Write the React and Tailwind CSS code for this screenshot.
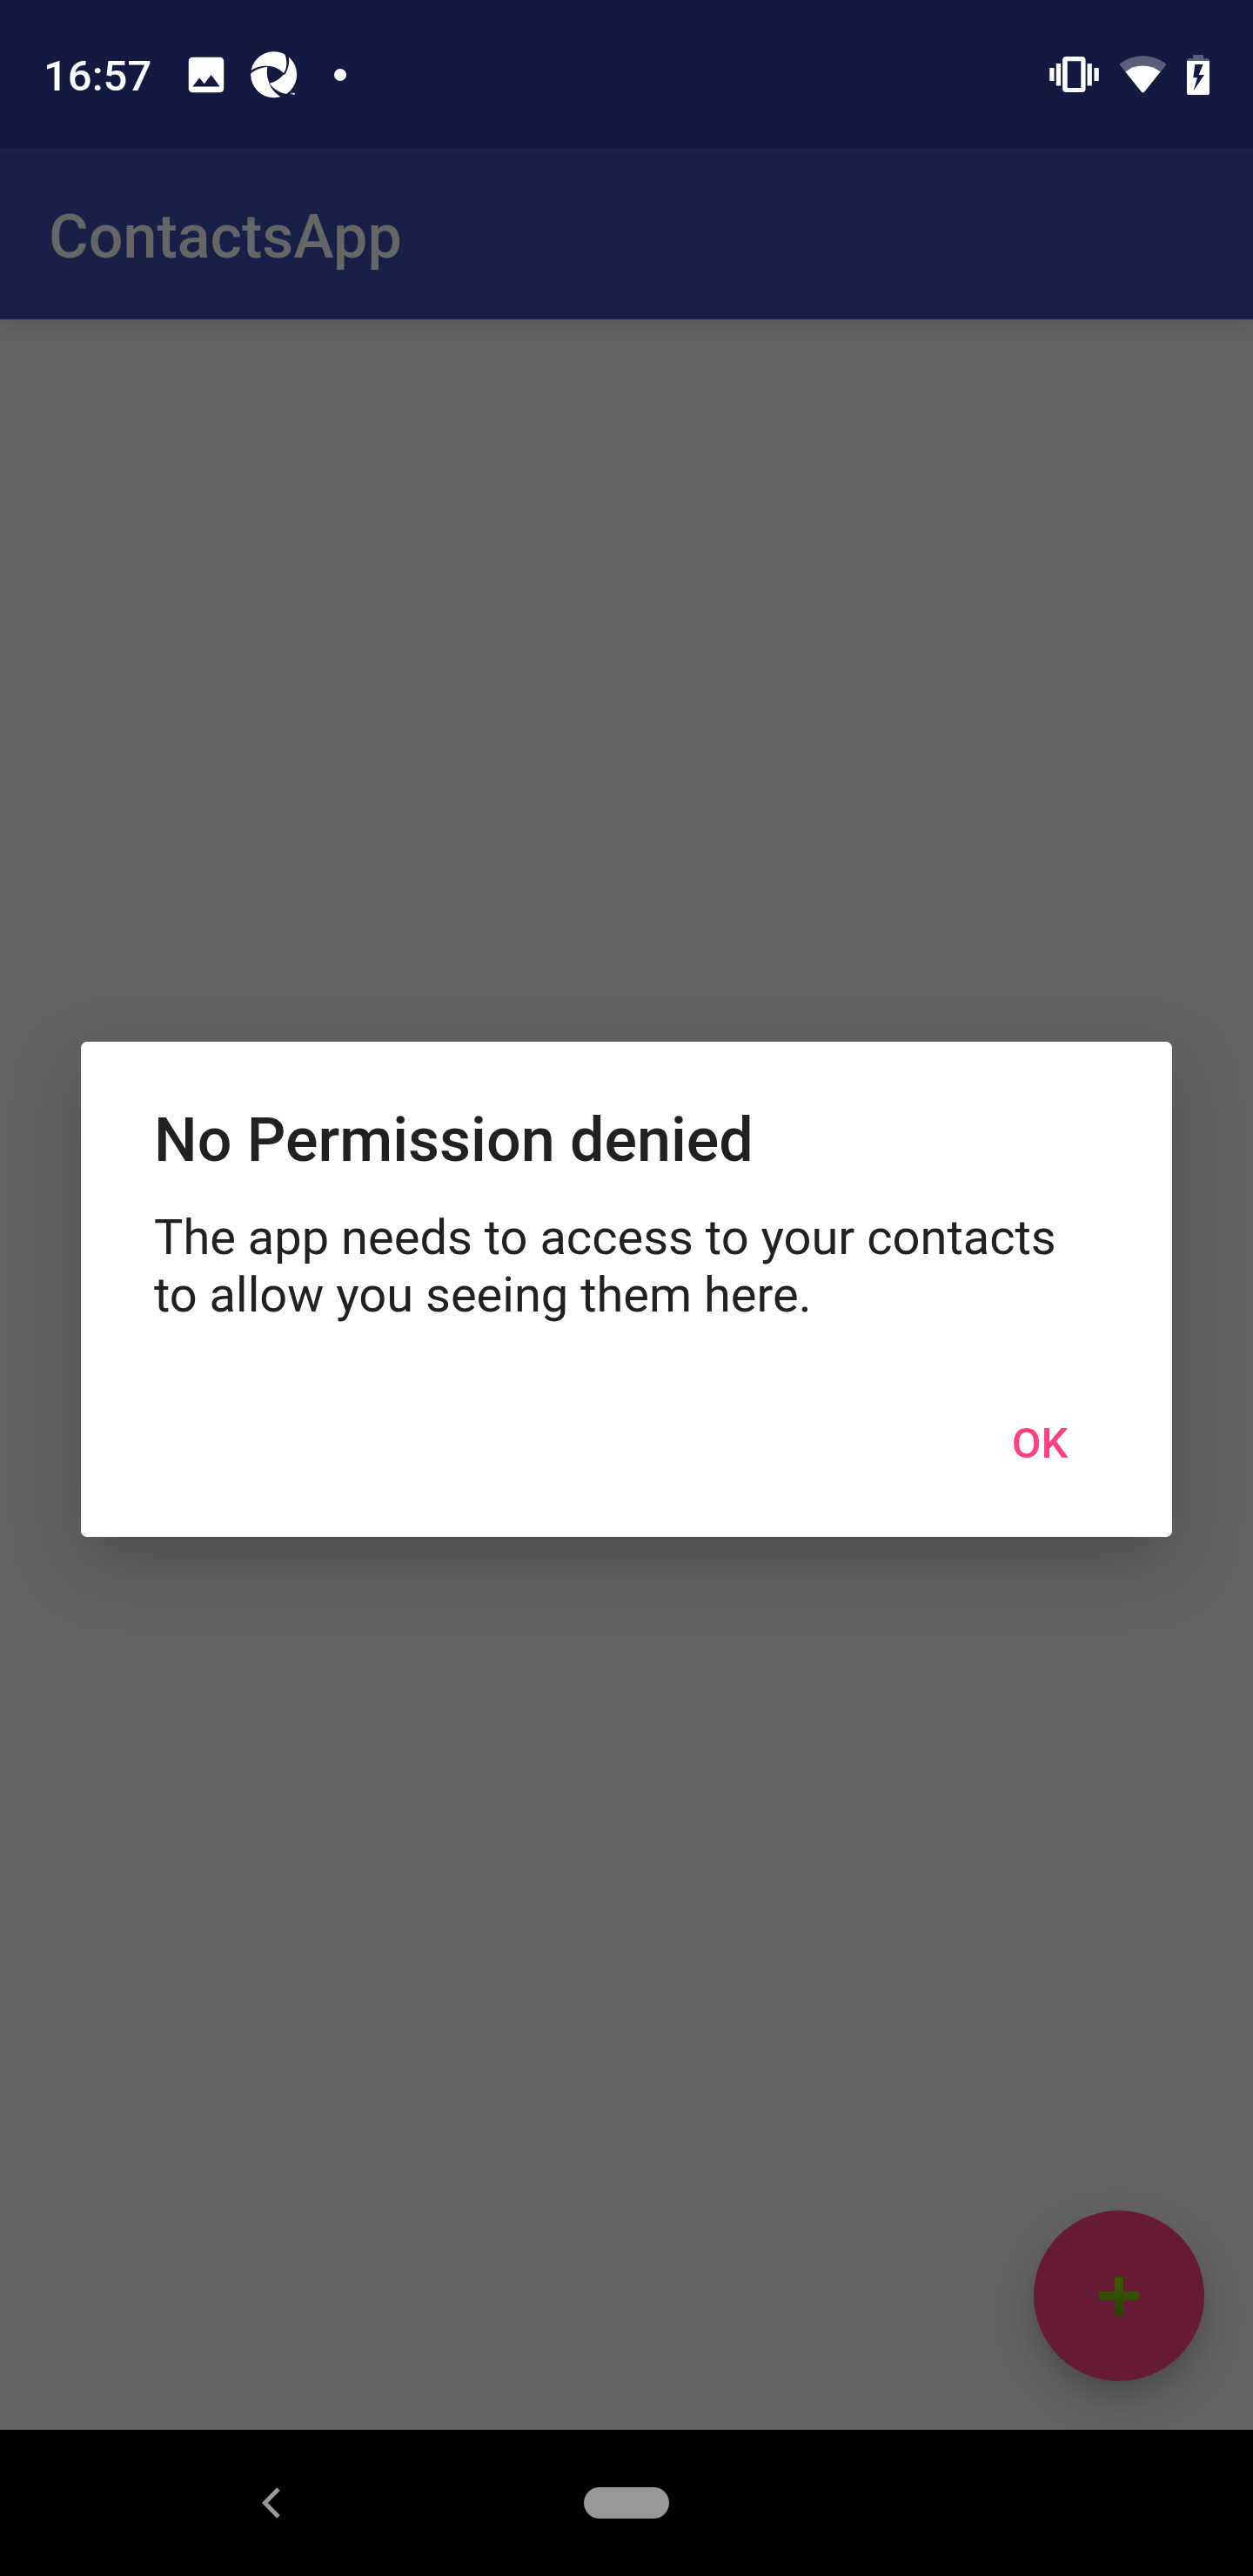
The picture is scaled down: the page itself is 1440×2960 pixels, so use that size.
function StatusBar() {
  return (
    <div className="flex h-[171px] items-center justify-between bg-[#131940] px-[50px] text-white">
      <div className="flex items-center">
        <span className="pt-1 text-[49px] leading-[58px] font-medium">16:57</span>
        <svg viewBox="0 0 24 24" className="ml-9 size-[54px]" fill="currentColor" aria-label="Picture">
          <path d="M21 19V5c0-1.100-.9-2-2-2H5c-1.100 0-2 .9-2 2v14c0 1.100.9 2 2 2h14c1.100 0 2-.9 2-2zM8.500 13.500l2.500 3.010L14.500 12l4.500 6H5l3.500-4.500z" />
        </svg>
        <svg viewBox="0 0 162 162" className="ml-6 size-[54px]" fill="none" aria-label="Shutter">
          <circle cx="80" cy="80" r="79.500" fill="#fff" />
          <g fill="#131940">
            <path d="M-2 67C18 54 38 49 57 50C82 50 102 62 116 77C103 93 85 106 65 110C56 92 55 72 58 53C35 56 15 63 -2 78Z" />
            <path d="M113 77C126 60 128 35 117 7L131 16C135 40 131 61 117 81Z" />
            <path d="M63 108C80 131 100 145 127 147L108 158C88 149 71 131 63 108Z" />
          </g>
          <path d="M138 143h6v2h-2v4h-2v-4h-2zM145 143h7v6h-7z" fill="#fff" />
        </svg>
        <span className="ml-[42px] size-[14px] rounded-full bg-white" />
      </div>
      <div className="flex items-center gap-6">
        <svg viewBox="72 104 171 124" className="h-[41px] w-[57px]" fill="#fff" aria-label="Vibrate">
          <path fillRule="evenodd" d="M130 104h54q13 0 13 13v98q0 13-13 13h-54q-13 0-13-13v-98q0-13 13-13zm4 16v93h47v-93z" />
          <path d="M72 143h16v46H72zM95 128h16v77H95zM203 128h16v77h-16zM227 143h16v46h-16z" />
        </svg>
        <svg viewBox="315 101 159 128" className="h-[43px] w-[53px]" fill="#fff" aria-label="Wi-Fi">
          <path fillOpacity=".3" d="M317 127Q350 101 394 101T472 127Q475 130 473 134L455 156Q431 135 394 135T334 156L316 134Q314 130 317 127Z" />
          <path d="M334 156Q358 135 394 135T455 156L399 226Q394 230 390 226Z" />
        </svg>
        <svg viewBox="549 96 78 138" className="h-[46px] w-[26px]" fill="#fff" aria-label="Charging">
          <path fillOpacity=".3" d="M570 96h36v13h14q7 0 7 8h-78q0-8 7-8h14z" />
          <path fillRule="evenodd" d="M549 117h78v112q0 5-5 5h-68q-5 0-5-5zm28 12l-6 46h14l-13 45 37-55h-19l15-36z" />
        </svg>
      </div>
    </div>
  );
}

function PermissionDialog() {
  return (
    <div className="absolute inset-0 flex items-center justify-center px-[93px]">
      <div
        role="alertdialog"
        aria-labelledby="dialog-title"
        aria-describedby="dialog-text"
        className="w-full rounded-[7px] bg-white px-[84px] pt-[72px] pb-11 text-[#212121] shadow-[0_28px_80px_rgba(0,0,0,0.24)]"
      >
        <h2 id="dialog-title" className="text-[70px] leading-[82px] font-medium">No Permission denied</h2>
        <p id="dialog-text" className="mt-[38px] text-[56px] leading-[66px]">
          The app needs to access to your contacts to allow you seeing them here.
        </p>
        <div className="-mr-11 mt-[75px] flex justify-end">
          <button type="button" className="h-[126px] w-56 text-[49px] leading-[58px] font-medium text-[#ff4081]">OK</button>
        </div>
      </div>
    </div>
  );
}

export default function App() {
  return (
    <div className="flex min-h-screen flex-col bg-[#646464] font-['Roboto',sans-serif]">
      <StatusBar />
      <div className="relative flex flex-1 flex-col">
        <header className="flex h-[196px] items-center bg-[#192048] px-14 pt-[6px] shadow-[0_6px_14px_rgba(0,0,0,0.12)]">
          <h1 className="text-[70px] leading-[82px] font-medium text-[#666666]">ContactsApp</h1>
        </header>
        <main className="flex flex-1 items-end justify-end p-14">
          <button
            type="button"
            aria-label="Add contact"
            className="flex size-[196px] items-center justify-center rounded-full bg-[#661a34] shadow-[0_20px_40px_rgba(0,0,0,0.25)]"
          >
            <svg viewBox="0 0 46 46" className="size-[46px]">
              <defs>
                <linearGradient id="plus" x1="0" y1="0" x2="0" y2="1">
                  <stop offset="0" stopColor="#2c4400" />
                  <stop offset=".08" stopColor="#3c5a00" />
                  <stop offset=".5" stopColor="#345000" />
                  <stop offset="1" stopColor="#2a4000" />
                </linearGradient>
              </defs>
              <path d="M19 0h8q1 0 1 1v17h17q1 0 1 1v8q0 1-1 1H28v17q0 1-1 1h-8q-1 0-1-1V28H1q-1 0-1-1v-8q0-1 1-1h17V1q0-1 1-1z" fill="url(#plus)" />
            </svg>
          </button>
        </main>
        <PermissionDialog />
      </div>
      <nav className="grid h-[168px] grid-cols-[1fr_98px_1fr] items-center bg-black">
        <button type="button" aria-label="Back" className="mr-80 flex size-20 items-center justify-center justify-self-end">
          <svg viewBox="0 0 21 36" className="h-9 w-[21px]" fill="none" stroke="#999" strokeWidth="5">
            <path d="M19 2L3.500 18L19 34" />
          </svg>
        </button>
        <button type="button" aria-label="Home" className="h-9 rounded-full bg-[#999999]" />
      </nav>
    </div>
  );
}
